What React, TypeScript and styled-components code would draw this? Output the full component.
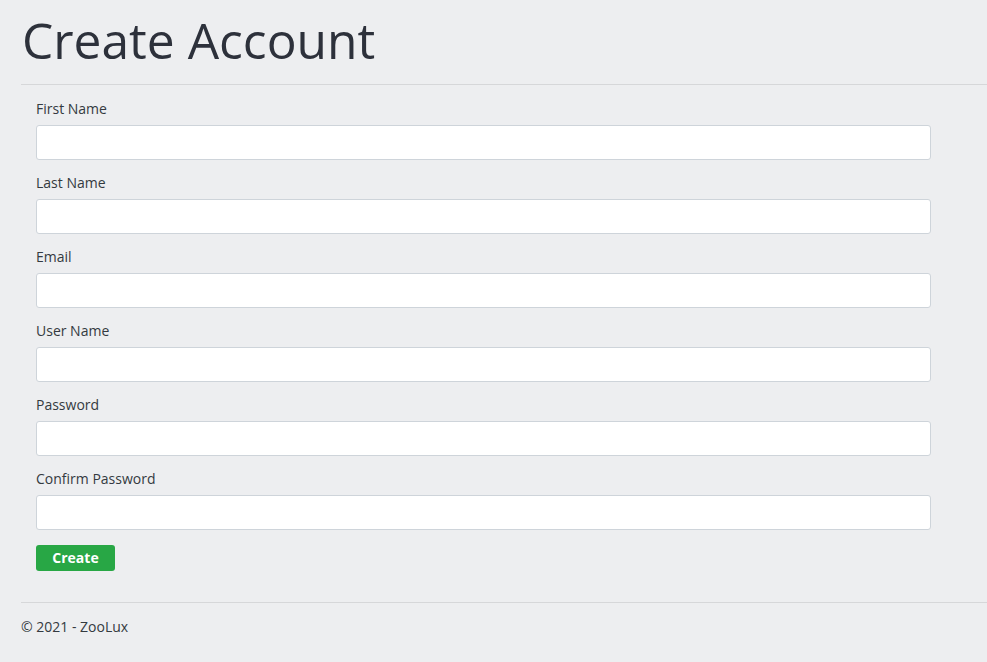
import React from 'react';
import styled, { createGlobalStyle } from 'styled-components';

const GlobalStyle = createGlobalStyle`
  html, body {
    margin: 0;
    padding: 0;
    background-color: #edeef0;
    font-family: "Open Sans", "Liberation Sans", sans-serif;
    color: #343a40;
  }
  * {
    box-sizing: border-box;
  }
`;

const Page = styled.div`
  display: flex;
  flex-direction: column;
  padding-left: 21px;
  min-height: 662px;
`;

const Header = styled.div`
  height: 85px;
  border-bottom: 1px solid #d6d7d9;
  display: flex;
  align-items: flex-start;
`;

const Title = styled.h1`
  margin: 0;
  padding-left: 1px;
  font-size: 49.7px;
  font-weight: 400;
  line-height: 80px;
  color: #2d313b;
`;

const Form = styled.form`
  display: flex;
  flex-direction: column;
  padding: 13px 0 0 15px;
`;

const Field = styled.div`
  display: flex;
  flex-direction: column;
  margin-bottom: 12px;
`;

const Label = styled.label`
  font-size: 14px;
  line-height: 21px;
  color: #343a40;
  margin-bottom: 6px;
`;

const Input = styled.input`
  width: 895px;
  height: 35px;
  border: 1px solid #ced4da;
  border-radius: 3px;
  background: #fff;
  padding: 6px 12px;
  font-family: inherit;
  font-size: 14px;
`;

const Button = styled.button`
  align-self: flex-start;
  margin-top: 3px;
  width: 79px;
  height: 26px;
  padding: 0 0 2px;
  border: none;
  border-radius: 3px;
  background-color: #28a745;
  color: #fff;
  font-family: inherit;
  font-weight: 700;
  font-size: 14px;
  cursor: pointer;
`;

const Footer = styled.footer`
  margin-top: 31px;
  border-top: 1px solid #d6d7d9;
  padding-top: 13px;
  font-size: 14px;
  line-height: 21px;
  color: #343a40;
`;

const fields = [
  { label: 'First Name', type: 'text' },
  { label: 'Last Name', type: 'text' },
  { label: 'Email', type: 'email' },
  { label: 'User Name', type: 'text' },
  { label: 'Password', type: 'password' },
  { label: 'Confirm Password', type: 'password' },
];

export default function App() {
  return (
    <>
      <GlobalStyle />
      <Page>
        <Header>
          <Title>Create Account</Title>
        </Header>
        <Form onSubmit={(e) => e.preventDefault()}>
          {fields.map((f) => (
            <Field key={f.label}>
              <Label>{f.label}</Label>
              <Input type={f.type} />
            </Field>
          ))}
          <Button type="submit">Create</Button>
        </Form>
        <Footer>© 2021 - ZooLux</Footer>
      </Page>
    </>
  );
}
